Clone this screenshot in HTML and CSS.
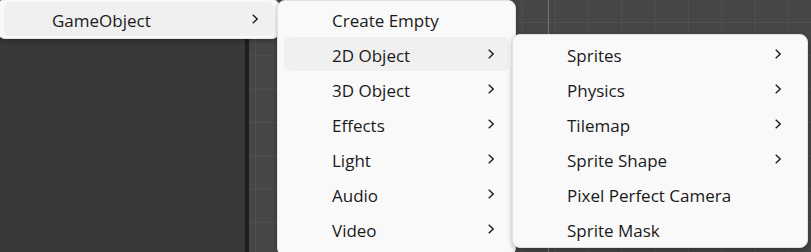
FILE: index.html
```html
<!DOCTYPE html>
<html lang="en">
<head>
    <meta charset="UTF-8">
    <title>GameObject menu</title>
    <link rel="stylesheet" href="styles.css">
</head>
<body>
    <div class="editor">
        <div class="hierarchy"></div>
        <div class="splitter"></div>
        <div class="scene">
            <div class="axis"></div>
        </div>
    </div>

    <!-- top level menu -->
    <div class="menu menu-main">
        <div class="item active">
            <span>GameObject</span>
            <svg class="chevron" viewBox="0 0 6 10"><polyline points="0.7,0.7 5.2,5 0.7,9.3"/></svg>
        </div>
    </div>

    <!-- GameObject submenu -->
    <div class="menu menu-gameobject">
        <div class="item"><span>Create Empty</span></div>
        <div class="item active"><span>2D Object</span>
            <svg class="chevron" viewBox="0 0 6 10"><polyline points="0.7,0.7 5.2,5 0.7,9.3"/></svg></div>
        <div class="item"><span>3D Object</span>
            <svg class="chevron" viewBox="0 0 6 10"><polyline points="0.7,0.7 5.2,5 0.7,9.3"/></svg></div>
        <div class="item"><span>Effects</span>
            <svg class="chevron" viewBox="0 0 6 10"><polyline points="0.7,0.7 5.2,5 0.7,9.3"/></svg></div>
        <div class="item"><span>Light</span>
            <svg class="chevron" viewBox="0 0 6 10"><polyline points="0.7,0.7 5.2,5 0.7,9.3"/></svg></div>
        <div class="item"><span>Audio</span>
            <svg class="chevron" viewBox="0 0 6 10"><polyline points="0.7,0.7 5.2,5 0.7,9.3"/></svg></div>
        <div class="item"><span>Video</span>
            <svg class="chevron" viewBox="0 0 6 10"><polyline points="0.7,0.7 5.2,5 0.7,9.3"/></svg></div>
    </div>

    <!-- 2D Object submenu -->
    <div class="menu menu-2d">
        <div class="item"><span>Sprites</span>
            <svg class="chevron" viewBox="0 0 6 10"><polyline points="0.7,0.7 5.2,5 0.7,9.3"/></svg></div>
        <div class="item"><span>Physics</span>
            <svg class="chevron" viewBox="0 0 6 10"><polyline points="0.7,0.7 5.2,5 0.7,9.3"/></svg></div>
        <div class="item"><span>Tilemap</span>
            <svg class="chevron" viewBox="0 0 6 10"><polyline points="0.7,0.7 5.2,5 0.7,9.3"/></svg></div>
        <div class="item"><span>Sprite Shape</span>
            <svg class="chevron" viewBox="0 0 6 10"><polyline points="0.7,0.7 5.2,5 0.7,9.3"/></svg></div>
        <div class="item"><span>Pixel Perfect Camera</span></div>
        <div class="item"><span>Sprite Mask</span></div>
    </div>
</body>
</html>
```

FILE: styles.css
```css
body {
    margin: 0;
    width: 811px;
    height: 252px;
    overflow: hidden;
    position: relative;
    font-family: "Open Sans", "Noto Sans", "Noto Sans CJK KR", sans-serif;
    font-size: 17px;
    color: #1a1a1a;
}
.editor {
    display: flex;
    height: 252px;
}
.hierarchy {
    width: 245px;
    background-color: #383838;
}
.splitter {
    width: 4px;
    background-color: #1e1e1e;
}
.scene {
    flex: 1;
    position: relative;
    background-color: #464646;
    background-image:
        linear-gradient(to right, #505050 1px, transparent 1px),
        linear-gradient(to bottom, #505050 1px, transparent 1px);
    background-size: 33.3px 33.3px;
    background-position: 6px 22px;
}
.axis {
    position: absolute;
    left: 299px;
    top: 0;
    bottom: 0;
    width: 1px;
    background-color: #767676;
}
.menu {
    position: absolute;
    background-color: #f9f9f9;
    border: 1px solid #e2e2e2;
    border-radius: 8px;
    box-shadow: 0 2px 5px rgba(0,0,0,0.28);
    padding: 1px 6px 0 6px;
    box-sizing: border-box;
}
.menu-main {
    left: -3px;
    top: -1px;
    width: 283px;
    height: 40px;
    padding-top: 2px;
}
.menu-gameobject {
    left: 277px;
    top: 0;
    width: 239px;
    height: 256px;
}
.menu-2d {
    left: 512px;
    top: 34px;
    width: 296px;
    height: 214px;
    padding-top: 2px;
}
.item {
    height: 34px;
    margin-bottom: 1px;
    display: flex;
    align-items: center;
    justify-content: space-between;
    padding: 2px 15px 0 48px;
    box-sizing: border-box;
    border-radius: 5px;
    white-space: nowrap;
}
.item .chevron {
    margin-top: -2px;
}
.item.active {
    background-color: #f0f0f0;
}
.menu-2d .item {
    padding-right: 20px;
}
.chevron {
    width: 6px;
    height: 10px;
    fill: none;
    stroke: #1a1a1a;
    stroke-width: 1.3;
}
```
